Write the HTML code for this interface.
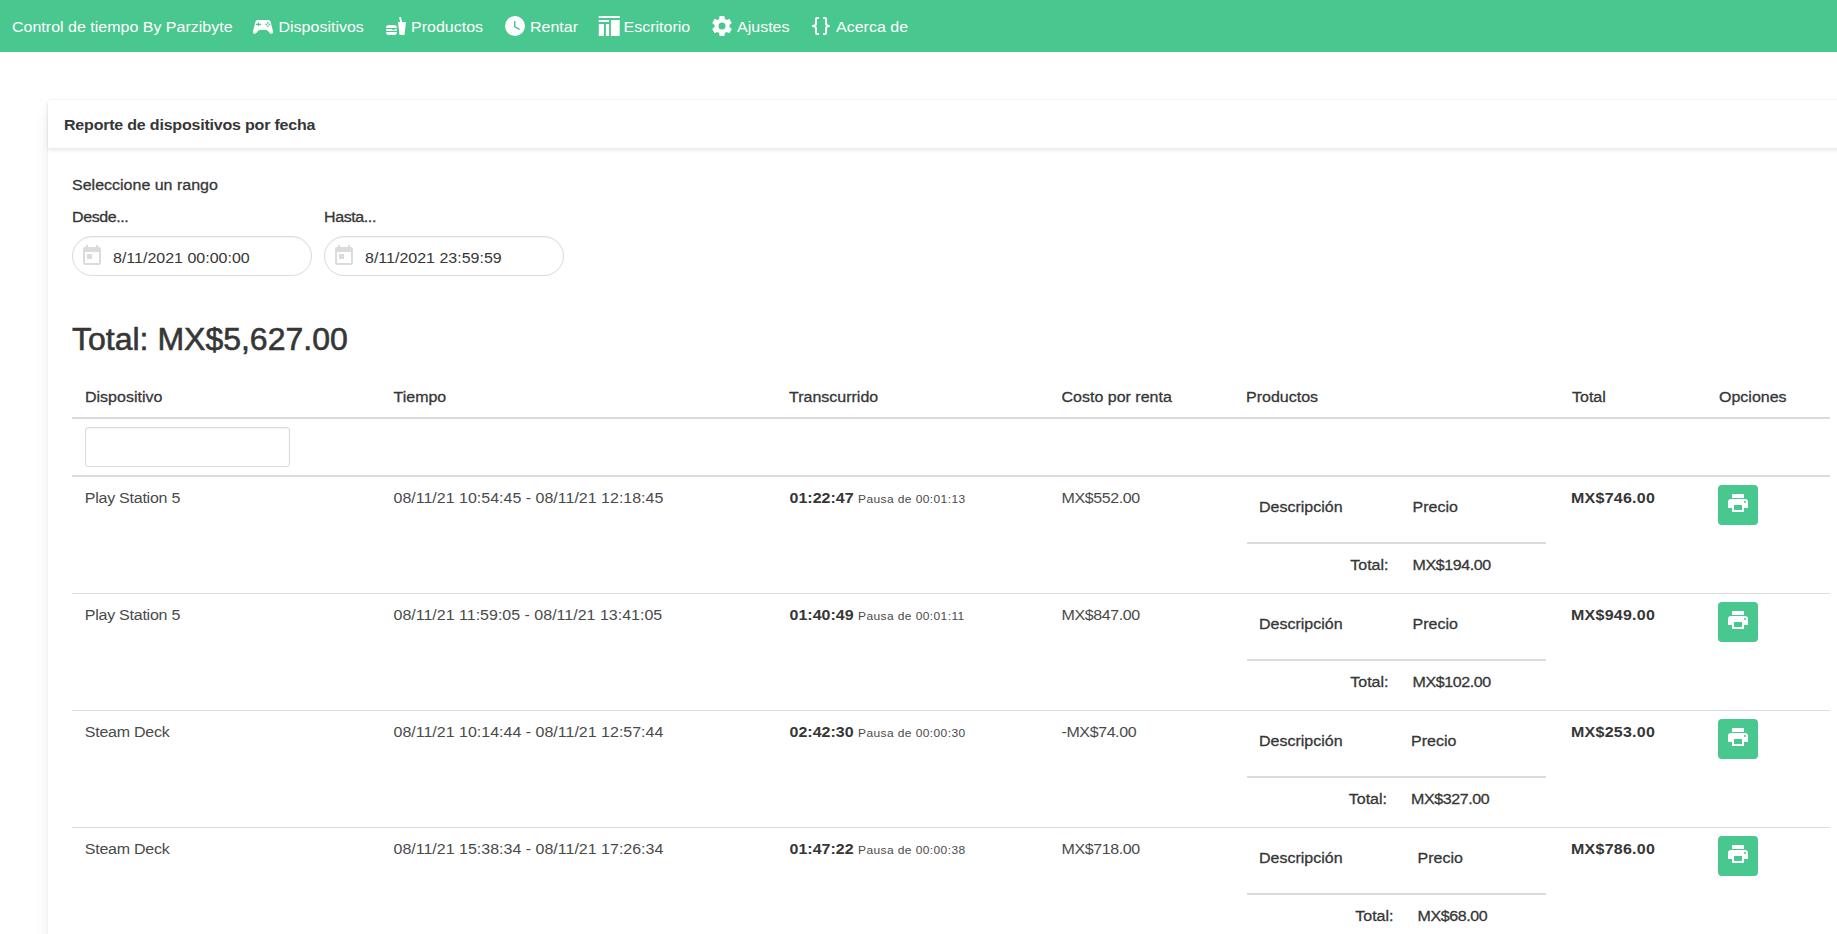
<!DOCTYPE html>
<html>
<head>
<meta charset="utf-8">
<style>
html,body{margin:0;padding:0;overflow:hidden;width:1837px;height:934px;background:#fff;}
body{font-family:"Liberation Sans",sans-serif;font-size:16px;line-height:24px;color:#4a4a4a;position:relative;}
.nav{position:absolute;left:0;top:0;width:1837px;height:52px;background:#48c78e;color:#fff;}
.nav .t{position:absolute;top:15px;line-height:24px;white-space:nowrap;}
.nav svg{position:absolute;top:14px;width:24px;height:24px;fill:#fff;}
.card{position:absolute;left:48px;top:100px;width:1806px;height:900px;background:#fff;
  box-shadow:0 8px 16px -2px rgba(10,10,10,.1),0 0 0 1px rgba(10,10,10,.02);border-radius:4px;}
.chead{position:absolute;left:0;top:0;right:0;height:48px;box-shadow:0 2px 4px rgba(10,10,10,.1);}
.chead .t{position:absolute;left:16px;top:13px;font-weight:700;color:#363636;letter-spacing:-0.2px;white-space:nowrap;}
.abs{position:absolute;white-space:nowrap;}
.abs,.cell,.nav .t,.inp .v,.chead .t{transform:scaleY(0.96);transform-origin:0 17.5px;}
.semi{color:#363636;-webkit-text-stroke:0.3px #363636;}
.inp{position:absolute;height:38px;border:1px solid #dbdbdb;border-radius:9999px;background:#fff;
  box-shadow:inset 0 1px 2px rgba(10,10,10,.05);}
.inp .v{position:absolute;left:40px;top:9px;color:#363636;}
.inp svg{position:absolute;left:7px;top:7px;width:24px;height:24px;fill:#dbdbdb;}
.title{position:absolute;left:72px;top:321px;font-size:32px;line-height:36px;color:#363636;white-space:nowrap;-webkit-text-stroke:0.6px #363636;}
.hline{position:absolute;background:#dbdbdb;}
.cell{position:absolute;white-space:nowrap;top:0;}
.row{position:absolute;left:72px;width:1758px;height:117px;}
.strong{font-weight:700;color:#363636;}
.money{letter-spacing:-0.4px;}
.bmoney{letter-spacing:0.25px;}
.small{font-size:12px;letter-spacing:0.4px;}
.btn{position:absolute;left:1646px;top:8px;width:40px;height:40px;border-radius:4px;background:#48c78e;}
.btn svg{position:absolute;left:8px;top:6px;width:24px;height:24px;fill:#fff;}
</style>
</head>
<body>
<div class="nav">
  <div class="t" style="left:12px">Control de tiempo By Parzibyte</div>
  <svg style="left:251.3px" viewBox="0 0 24 24"><path fill-rule="evenodd" d="M6.3,6H17.7Q19.2,6 19.5,7.6L22.1,17.4Q22.4,19.7 20.4,19.8Q19.6,19.8 19,19.2L15.9,16.1H8.1L5,19.2Q4.4,19.8 3.6,19.8Q1.6,19.7 1.9,17.4L4.5,7.6Q4.8,6 6.3,6Z M5,9.7H6.9V8.4H8.1V9.7H10.1V11H8.1V12.3H6.9V11H5Z M14.35,10.4a0.85,0.85 0 1,0 1.7,0a0.85,0.85 0 1,0 -1.7,0ZM17.549999999999997,10.4a0.85,0.85 0 1,0 1.7,0a0.85,0.85 0 1,0 -1.7,0ZM15.950000000000001,8.8a0.85,0.85 0 1,0 1.7,0a0.85,0.85 0 1,0 -1.7,0ZM15.950000000000001,12.0a0.85,0.85 0 1,0 1.7,0a0.85,0.85 0 1,0 -1.7,0Z"/></svg>
  <div class="t" style="left:278.5px">Dispositivos</div>
  <svg style="left:383.5px" viewBox="0 0 24 24"><path d="M15.5,21L14,8H16.23L15.1,3.46L16.84,3L18.09,8H22L20.5,21H15.5M5,11H10A3,3 0 0,1 13,14H2A3,3 0 0,1 5,11M13,18A3,3 0 0,1 10,21H5A3,3 0 0,1 2,18H13M3,15H8L9.5,16.5L11,15H12A1,1 0 0,1 13,16A1,1 0 0,1 12,17H3A1,1 0 0,1 2,16A1,1 0 0,1 3,15Z"/></svg>
  <div class="t" style="left:411px">Productos</div>
  <svg style="left:503px" viewBox="0 0 24 24"><path d="M12,2A10,10 0 0,1 22,12A10,10 0 0,1 12,22A10,10 0 0,1 2,12A10,10 0 0,1 12,2M12.5,7H11V13L16.25,16.15L17,14.92L12.5,12.25V7Z"/></svg>
  <div class="t" style="left:530px">Rentar</div>
  <svg style="left:597px" viewBox="0 0 24 24"><path d="M1.7,1.9H22.7V3.9H1.7Z M1.7,6.1H12.1V8H1.7Z M1.8,10H7V21.9H1.8Z M8.9,10H12.1V21.9H8.9Z M13.9,6.1H22.7V21.9H13.9Z"/></svg>
  <div class="t" style="left:623.5px">Escritorio</div>
  <svg style="left:710px" viewBox="0 0 24 24"><path d="M12,15.5A3.5,3.5 0 0,1 8.5,12A3.5,3.5 0 0,1 12,8.5A3.5,3.5 0 0,1 15.5,12A3.5,3.5 0 0,1 12,15.5M19.43,12.97C19.47,12.65 19.5,12.33 19.5,12C19.5,11.67 19.47,11.34 19.43,11L21.54,9.37C21.73,9.22 21.78,8.95 21.66,8.73L19.66,5.27C19.54,5.05 19.27,4.96 19.05,5.05L16.56,6.05C16.04,5.66 15.5,5.32 14.87,5.07L14.5,2.42C14.46,2.18 14.25,2 14,2H10C9.750,2 9.54,2.18 9.5,2.42L9.13,5.070C8.5,5.32 7.96,5.66 7.44,6.05L4.95,5.05C4.73,4.96 4.46,5.05 4.34,5.27L2.34,8.73C2.21,8.95 2.27,9.22 2.46,9.37L4.57,11C4.53,11.34 4.5,11.67 4.5,12C4.5,12.33 4.53,12.65 4.57,12.97L2.46,14.63C2.27,14.78 2.21,15.05 2.34,15.27L4.34,18.73C4.46,18.95 4.73,19.03 4.95,18.950L7.44,17.94C7.96,18.34 8.5,18.68 9.13,18.93L9.5,21.58C9.54,21.820 9.75,22 10,22H14C14.25,22 14.46,21.82 14.5,21.58L14.87,18.93C15.5,18.67 16.04,18.34 16.56,17.94L19.05,18.95C19.27,19.03 19.54,18.95 19.66,18.73L21.66,15.27C21.78,15.05 21.73,14.78 21.54,14.63L19.43,12.97Z"/></svg>
  <div class="t" style="left:737px">Ajustes</div>
  <svg style="left:808.5px" viewBox="0 0 24 24"><path d="M8,3A2,2 0 0,0 6,5V9A2,2 0 0,1 4,11H3V13H4A2,2 0 0,1 6,15V19A2,2 0 0,0 8,21H10V19H8V14A2,2 0 0,0 6,12A2,2 0 0,0 8,10V5H10V3M16,3A2,2 0 0,1 18,5V9A2,2 0 0,0 20,11H21V13H20A2,2 0 0,0 18,15V19A2,2 0 0,1 16,21H14V19H16V14A2,2 0 0,1 18,12A2,2 0 0,1 16,10V5H14V3H16Z"/></svg>
  <div class="t" style="left:836px">Acerca de</div>
</div>

<div class="card">
  <div class="chead"><div class="t">Reporte de dispositivos por fecha</div></div>
</div>

<!-- form -->
<div class="abs semi" style="left:72px;top:173px">Seleccione un rango</div>
<div class="abs semi" style="left:72px;top:205px;letter-spacing:-0.4px">Desde...</div>
<div class="abs semi" style="left:324px;top:205px;letter-spacing:-0.4px">Hasta...</div>
<div class="inp" style="left:72px;top:236px;width:238px">
  <svg viewBox="0 0 24 24"><path d="M7,10H12V15H7M19,19H5V8H19M19,3H18V1H16V3H8V1H6V3H5C3.89,3 3,3.9 3,5V19A2,2 0 0,0 5,21H19A2,2 0 0,0 21,19V5A2,2 0 0,0 19,3Z"/></svg>
  <div class="v">8/11/2021 00:00:00</div>
</div>
<div class="inp" style="left:324px;top:236px;width:238px">
  <svg viewBox="0 0 24 24"><path d="M7,10H12V15H7M19,19H5V8H19M19,3H18V1H16V3H8V1H6V3H5C3.89,3 3,3.9 3,5V19A2,2 0 0,0 5,21H19A2,2 0 0,0 21,19V5A2,2 0 0,0 19,3Z"/></svg>
  <div class="v">8/11/2021 23:59:59</div>
</div>

<div class="title">Total: MX$5,627.00</div>

<!-- table header -->
<div class="abs semi" style="left:85px;top:385px">Dispositivo</div>
<div class="abs semi" style="left:393.5px;top:385px">Tiempo</div>
<div class="abs semi" style="left:789px;top:385px">Transcurrido</div>
<div class="abs semi" style="left:1061.5px;top:385px">Costo por renta</div>
<div class="abs semi" style="left:1246px;top:385px">Productos</div>
<div class="abs semi" style="left:1572px;top:385px">Total</div>
<div class="abs semi" style="left:1719px;top:385px">Opciones</div>
<div class="hline" style="left:72px;top:417px;width:1758px;height:2px"></div>
<div style="position:absolute;left:85px;top:427px;width:203px;height:38px;border:1px solid #dbdbdb;border-radius:3px;box-shadow:inset 0 1px 2px rgba(10,10,10,.05)"></div>
<div class="hline" style="left:72px;top:475px;width:1758px;height:2px"></div>

<div id="rows">
<div class="row" style="top:477px">
  <div class="cell" style="left:12.8px;top:9px;letter-spacing:-0.25px">Play Station 5</div>
  <div class="cell" style="left:321.5px;top:9px">08/11/21 10:54:45 - 08/11/21 12:18:45</div>
  <div class="cell" style="left:717.5px;top:9px"><span class="strong">01:22:47</span> <span class="small">Pausa de 00:01:13</span></div>
  <div class="cell money" style="left:989.5px;top:9px">MX$552.00</div>
  <div class="cell semi" style="left:1187px;top:18px">Descripción</div>
  <div class="cell semi" style="left:1340.5px;top:18px">Precio</div>
  <div class="hline" style="left:1175px;top:65px;width:299px;height:2px"></div>
  <div class="cell semi" style="right:441.5px;top:75.5px">Total:</div>
  <div class="cell semi money" style="left:1340.5px;top:75.5px">MX$194.00</div>
  <div class="cell strong bmoney" style="left:1499px;top:9px">MX$746.00</div>
  <div class="btn"><svg viewBox="0 0 24 24"><path d="M18,3H6V7H18M19,12A1,1 0 0,1 18,11A1,1 0 0,1 19,10A1,1 0 0,1 20,11A1,1 0 0,1 19,12M16,19H8V14H16M19,8H5A3,3 0 0,0 2,11V17H6V21H18V17H22V11A3,3 0 0,0 19,8Z"/></svg></div>
</div>
<div class="hline" style="left:72px;top:593px;width:1758px;height:1px"></div>
<div class="row" style="top:594px">
  <div class="cell" style="left:12.8px;top:9px;letter-spacing:-0.25px">Play Station 5</div>
  <div class="cell" style="left:321.5px;top:9px">08/11/21 11:59:05 - 08/11/21 13:41:05</div>
  <div class="cell" style="left:717.5px;top:9px"><span class="strong">01:40:49</span> <span class="small">Pausa de 00:01:11</span></div>
  <div class="cell money" style="left:989.5px;top:9px">MX$847.00</div>
  <div class="cell semi" style="left:1187px;top:18px">Descripción</div>
  <div class="cell semi" style="left:1340.5px;top:18px">Precio</div>
  <div class="hline" style="left:1175px;top:65px;width:299px;height:2px"></div>
  <div class="cell semi" style="right:441.5px;top:75.5px">Total:</div>
  <div class="cell semi money" style="left:1340.5px;top:75.5px">MX$102.00</div>
  <div class="cell strong bmoney" style="left:1499px;top:9px">MX$949.00</div>
  <div class="btn"><svg viewBox="0 0 24 24"><path d="M18,3H6V7H18M19,12A1,1 0 0,1 18,11A1,1 0 0,1 19,10A1,1 0 0,1 20,11A1,1 0 0,1 19,12M16,19H8V14H16M19,8H5A3,3 0 0,0 2,11V17H6V21H18V17H22V11A3,3 0 0,0 19,8Z"/></svg></div>
</div>
<div class="hline" style="left:72px;top:710px;width:1758px;height:1px"></div>
<div class="row" style="top:711px">
  <div class="cell" style="left:12.8px;top:9px;letter-spacing:-0.25px">Steam Deck</div>
  <div class="cell" style="left:321.5px;top:9px">08/11/21 10:14:44 - 08/11/21 12:57:44</div>
  <div class="cell" style="left:717.5px;top:9px"><span class="strong">02:42:30</span> <span class="small">Pausa de 00:00:30</span></div>
  <div class="cell money" style="left:989.5px;top:9px">-MX$74.00</div>
  <div class="cell semi" style="left:1187px;top:18px">Descripción</div>
  <div class="cell semi" style="left:1339px;top:18px">Precio</div>
  <div class="hline" style="left:1175px;top:65px;width:299px;height:2px"></div>
  <div class="cell semi" style="right:443px;top:75.5px">Total:</div>
  <div class="cell semi money" style="left:1339px;top:75.5px">MX$327.00</div>
  <div class="cell strong bmoney" style="left:1499px;top:9px">MX$253.00</div>
  <div class="btn"><svg viewBox="0 0 24 24"><path d="M18,3H6V7H18M19,12A1,1 0 0,1 18,11A1,1 0 0,1 19,10A1,1 0 0,1 20,11A1,1 0 0,1 19,12M16,19H8V14H16M19,8H5A3,3 0 0,0 2,11V17H6V21H18V17H22V11A3,3 0 0,0 19,8Z"/></svg></div>
</div>
<div class="hline" style="left:72px;top:827px;width:1758px;height:1px"></div>
<div class="row" style="top:828px">
  <div class="cell" style="left:12.8px;top:9px;letter-spacing:-0.25px">Steam Deck</div>
  <div class="cell" style="left:321.5px;top:9px">08/11/21 15:38:34 - 08/11/21 17:26:34</div>
  <div class="cell" style="left:717.5px;top:9px"><span class="strong">01:47:22</span> <span class="small">Pausa de 00:00:38</span></div>
  <div class="cell money" style="left:989.5px;top:9px">MX$718.00</div>
  <div class="cell semi" style="left:1187px;top:18px">Descripción</div>
  <div class="cell semi" style="left:1345.5px;top:18px">Precio</div>
  <div class="hline" style="left:1175px;top:65px;width:299px;height:2px"></div>
  <div class="cell semi" style="right:436.5px;top:75.5px">Total:</div>
  <div class="cell semi money" style="left:1345.5px;top:75.5px">MX$68.00</div>
  <div class="cell strong bmoney" style="left:1499px;top:9px">MX$786.00</div>
  <div class="btn"><svg viewBox="0 0 24 24"><path d="M18,3H6V7H18M19,12A1,1 0 0,1 18,11A1,1 0 0,1 19,10A1,1 0 0,1 20,11A1,1 0 0,1 19,12M16,19H8V14H16M19,8H5A3,3 0 0,0 2,11V17H6V21H18V17H22V11A3,3 0 0,0 19,8Z"/></svg></div>
</div>
<div class="hline" style="left:72px;top:944px;width:1758px;height:1px"></div>
</div>
</body>
</html>
